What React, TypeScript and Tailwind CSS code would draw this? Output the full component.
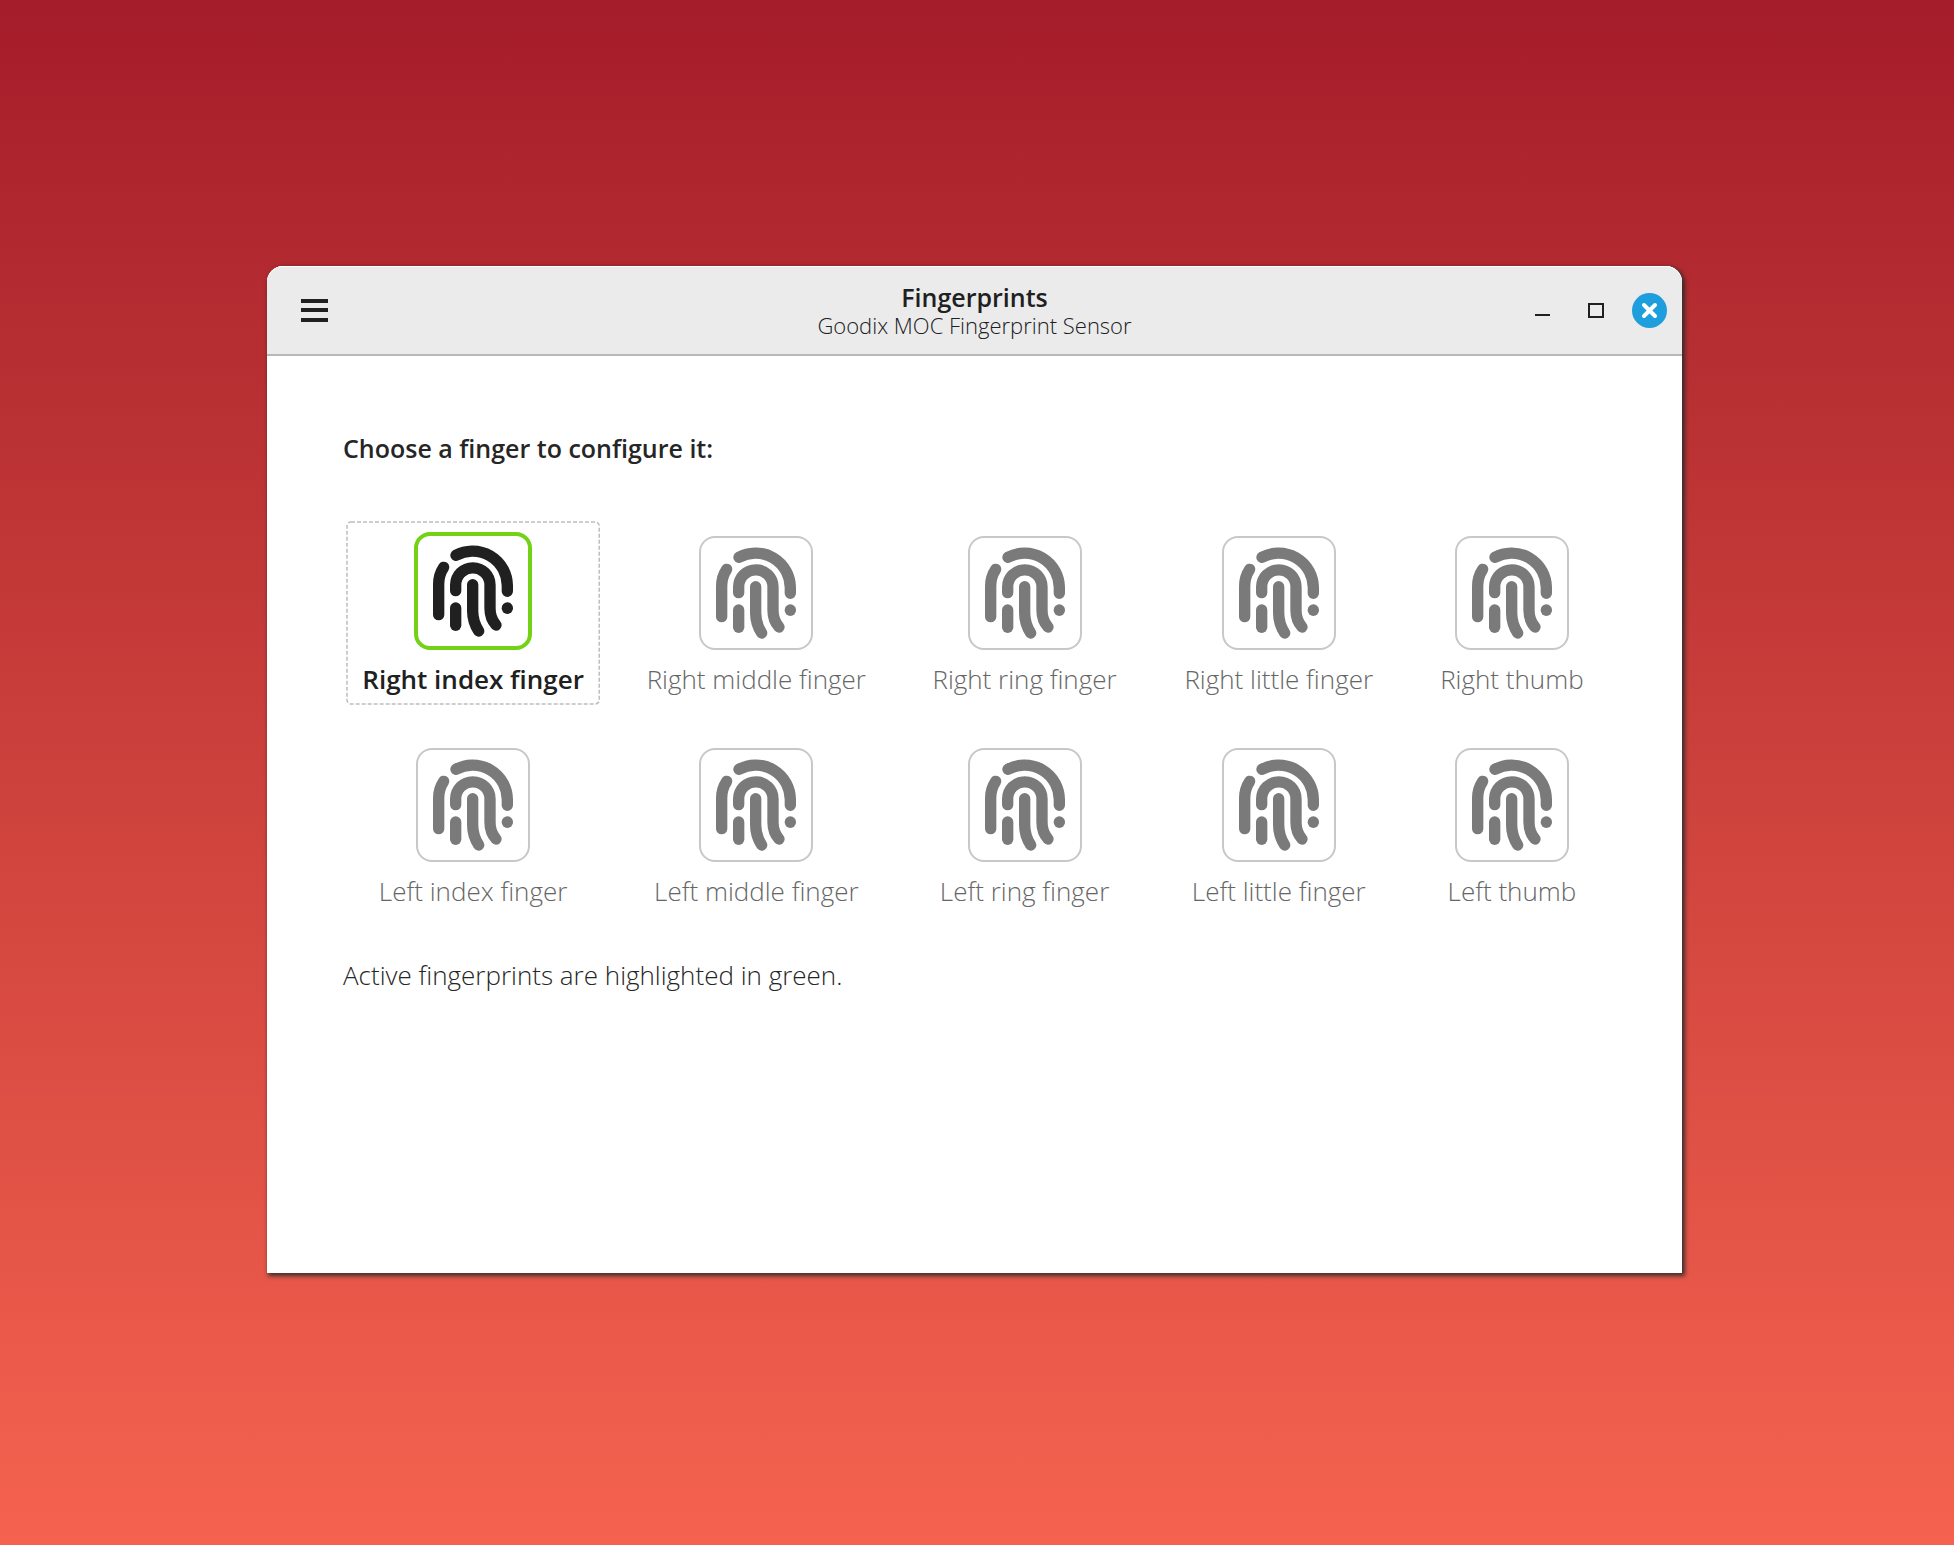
import clsx from "clsx";

const rightHand = ["Right index finger", "Right middle finger", "Right ring finger", "Right little finger", "Right thumb"];
const leftHand = ["Left index finger", "Left middle finger", "Left ring finger", "Left little finger", "Left thumb"];
const enrolled = ["Right index finger"];

function FingerprintIcon() {
  return (
    <svg
      viewBox="0 0 240 276"
      className="h-[92px] w-20"
      fill="none"
      stroke="currentColor"
      strokeWidth="34"
      strokeLinecap="round"
      aria-hidden="true"
    >
      <path d="M32 67C22 82 17 97 17 117V209" />
      <path d="M69 31A104 104 0 0 1 223 121V139" />
      <path d="M68 137V120A51.5 51.5 0 0 1 171 120V190C171 210 177 227 189 240" />
      <path d="M119 119V198C119 222 126 241 137 258" />
      <path d="M68 189V241" />
      <path d="M223 189V190" />
    </svg>
  );
}

function FocusFrame() {
  return (
    <svg className="absolute inset-0 size-full" fill="none" stroke="#bdbdbd" strokeWidth="1.5" strokeDasharray="4 2" aria-hidden="true">
      <rect x="1" y="1" rx="4" className="h-[calc(100%-2px)] w-[calc(100%-2px)]" />
    </svg>
  );
}

function FingerButton({ label, active }: { label: string; active: boolean }) {
  return (
    <button
      type="button"
      aria-pressed={active}
      className="relative flex h-[184px] flex-col items-center justify-end pb-2.5 outline-none"
    >
      {active && <FocusFrame />}
      <span
        className={clsx(
          "flex items-center justify-center rounded-2xl bg-white",
          active ? "size-[118px] border-4 border-[#73d216] text-[#202020]" : "size-[114px] border-2 border-[#c8c8ca] text-[#7a7a7a]"
        )}
      >
        <FingerprintIcon />
      </span>
      <span
        className={clsx(
          "mt-[13px] whitespace-nowrap text-[26px] leading-8",
          active ? "font-semibold text-[#202020]" : "font-light text-[#666666]"
        )}
      >
        {label}
      </span>
    </button>
  );
}

function TitleBar() {
  return (
    <header className="grid h-[90px] grid-cols-[1fr_auto_1fr] items-center rounded-t-2xl border-b-2 border-[#b8b8b9] bg-[#ebebec] text-[#202020] shadow-[inset_0_1px_0_#ffffff]">
      <button type="button" aria-label="Menu" className="ml-[34px] w-7">
        <svg viewBox="0 0 28 24" className="h-6 w-7" fill="currentColor">
          <path d="M0 1h27v4H0zM0 10h27v4H0zM0 20h27v4H0z" />
        </svg>
      </button>
      <div className="pt-0.5 text-center">
        <h1 className="text-[25px] leading-7 font-semibold">Fingerprints</h1>
        <p className="text-[22px] leading-7 font-light">Goodix MOC Fingerprint Sensor</p>
      </div>
      <div className="flex justify-end gap-[18px] pr-[15px]">
        <button type="button" aria-label="Minimize" className="size-[35px]">
          <svg viewBox="0 0 35 35" className="size-[35px]" fill="currentColor">
            <path d="M9 21h15v2H9z" />
          </svg>
        </button>
        <button type="button" aria-label="Maximize" className="size-[35px]">
          <svg viewBox="0 0 35 35" className="size-[35px]" fill="none" stroke="currentColor" strokeWidth="2">
            <path d="M10 11h14v13H10z" />
          </svg>
        </button>
        <button type="button" aria-label="Close" className="size-[35px] rounded-full bg-[#1f9ede] text-white">
          <svg viewBox="0 0 35 35" className="size-[35px]" fill="none" stroke="currentColor" strokeWidth="4" strokeLinecap="round">
            <path d="M12 12l11 11M23 12L12 23" />
          </svg>
        </button>
      </div>
    </header>
  );
}

export default function App() {
  return (
    <div className="flex min-h-screen bg-linear-to-b from-[#a51c2a] to-[#f5624f] pt-[266px] pr-[272px] pb-[272px] pl-[267px] font-['Open_Sans',sans-serif]">
      <div className="flex flex-1 flex-col rounded-t-2xl bg-white shadow-[2px_2px_4px_1px_#2a2a2ae0]">
        <TitleBar />
        <main className="px-[76px] pt-[76px] text-[#262626]">
          <h2 className="text-[25px] leading-8 font-semibold">Choose a finger to configure it:</h2>
          <div className="mx-[3px] mt-[57px] grid grid-cols-[254fr_254fr_224fr_226fr_182fr] gap-x-[29px] gap-y-7">
            {[...rightHand, ...leftHand].map((label) => (
              <FingerButton key={label} label={label} active={enrolled.includes(label)} />
            ))}
          </div>
          <p className="mt-[42px] text-[26px] leading-8 font-light">Active fingerprints are highlighted in green.</p>
        </main>
      </div>
    </div>
  );
}
